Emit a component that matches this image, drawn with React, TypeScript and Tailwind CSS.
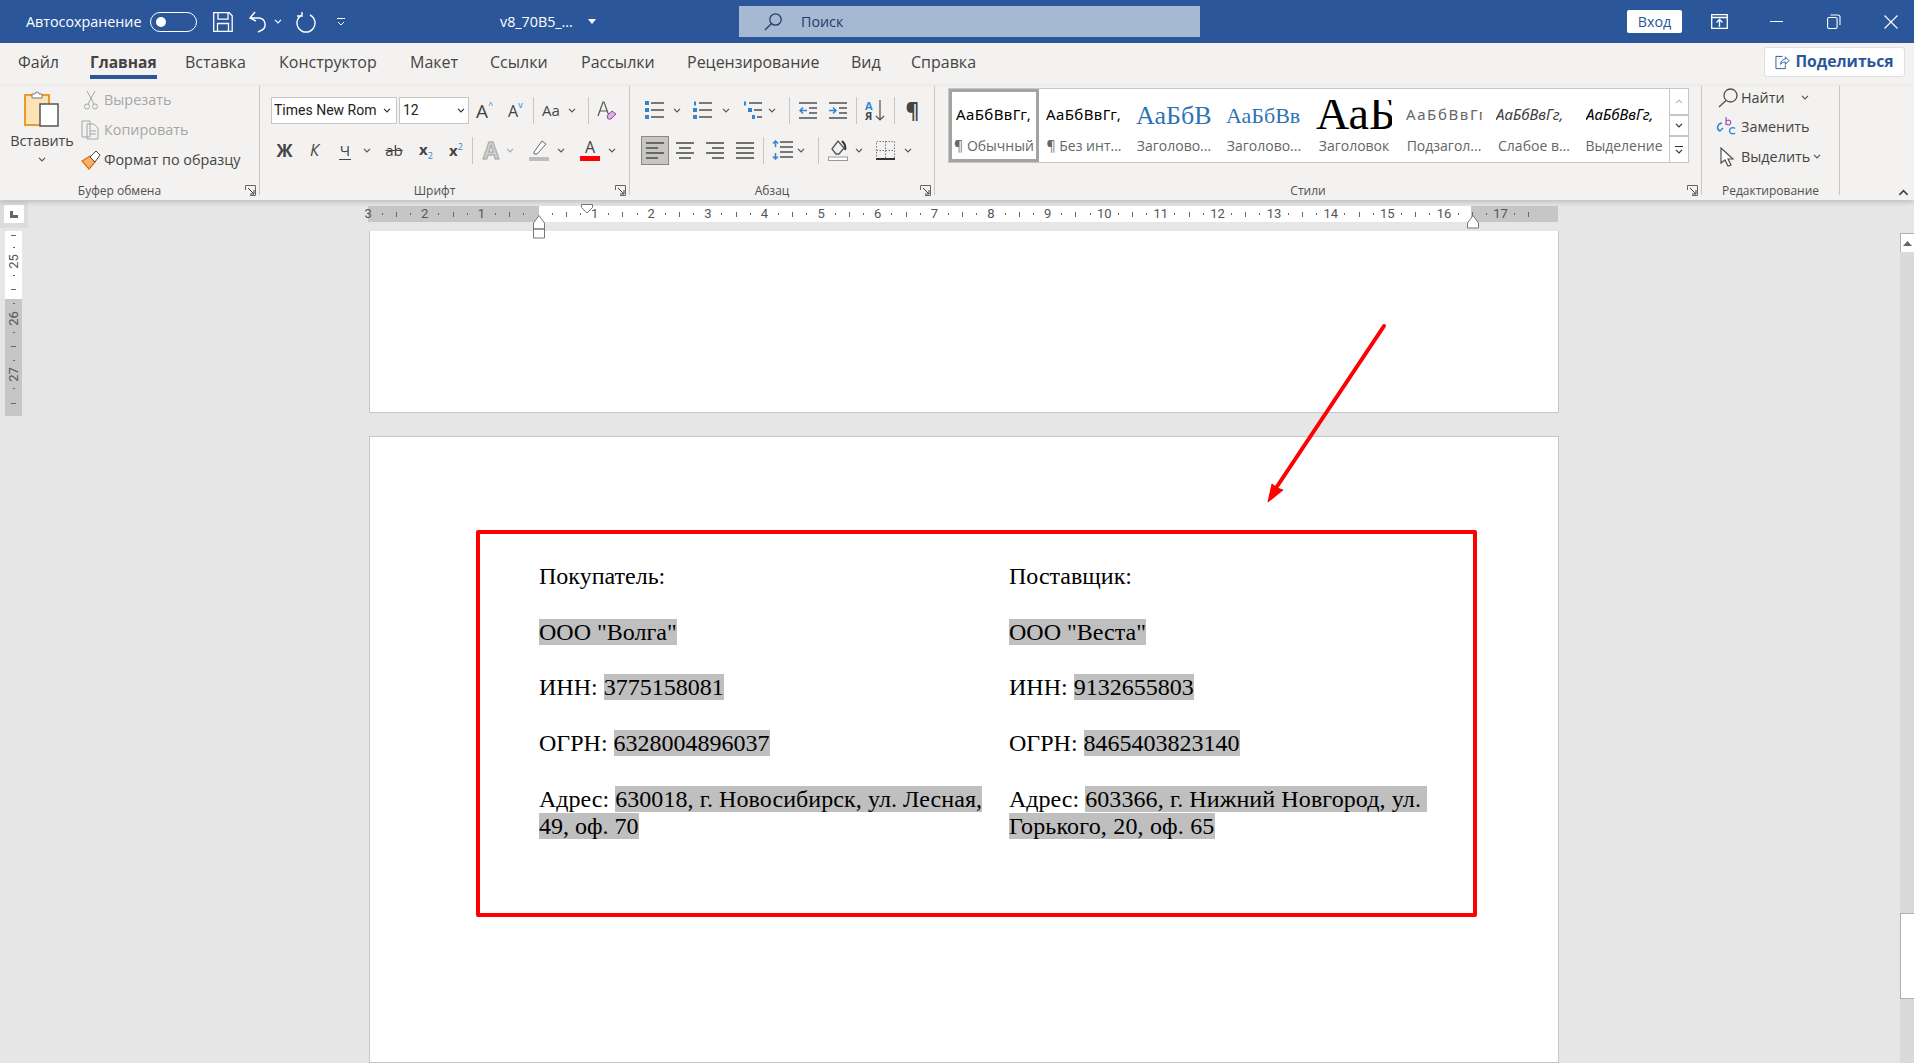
import React from "react";

const S = "#505050";
const Chev = ({ className = "", color = "#555" }: { className?: string; color?: string }) => (
  <svg viewBox="0 0 8 5" className={`h-[5px] w-[8px] shrink-0 ${className}`} fill="none" stroke={color} strokeWidth="1.2"><path d="M1 .8l3 3 3-3" /></svg>
);
const Sep = ({ className = "" }: { className?: string }) => <div className={`h-[27px] w-px shrink-0 bg-[#c8c6c4] ${className}`} />;
const Launcher = () => (
  <svg viewBox="0 0 11 11" className="absolute bottom-[-1px] right-[3px] h-[11px] w-[11px]" fill="none" stroke="#666"><path d="M.5 5V.5h10v10H5" /><path d="M3 3l6 6M5 9h4V5" stroke="#444" /></svg>
);
const Group = ({ w, label, children, centered }: { w: string; label: string; children: React.ReactNode; centered?: boolean }) => (
  <div className={`relative h-[109px] shrink-0 border-r border-[#c8c6c4] ${w}`}>
    <div className="flex h-[100px] flex-col">{children}</div>
    <div className={`h-[10px] text-center text-[12px] leading-[10px] text-[#505050] ${centered ? "" : "pr-[20px]"}`}>{label}</div>
  </div>
);
const Lines = ({ rows, className = "" }: { rows: [number, number][]; className?: string }) => (
  <svg viewBox="0 0 18 17" className={`h-[17px] w-[18px] shrink-0 ${className}`} stroke={S} strokeWidth="1.6">
    {rows.map(([a, b], i) => <line key={i} x1={a} x2={b} y1={1 + i * 5} y2={1 + i * 5} />)}
  </svg>
);
const TabNames: [string, string][] = [
  ["Файл", "ml-[18px] w-[40px]"],
  ["Главная", "ml-[32px] w-[67px]"],
  ["Вставка", "ml-[28px] w-[61px]"],
  ["Конструктор", "ml-[33px] w-[98px]"],
  ["Макет", "ml-[33px] w-[48px]"],
  ["Ссылки", "ml-[32px] w-[58px]"],
  ["Рассылки", "ml-[33px] w-[74px]"],
  ["Рецензирование", "ml-[32px] w-[134px]"],
  ["Вид", "ml-[30px] w-[30px]"],
  ["Справка", "ml-[30px] w-[66px]"],
];
const styles = [
  { p: "АаБбВвГг,", l: "¶ Обычный", c: "text-[15px] tracking-[.4px] text-black font-['Noto_Sans']", sel: true },
  { p: "АаБбВвГг,", l: "¶ Без инт...", c: "text-[15px] tracking-[.4px] text-black font-['Noto_Sans']" },
  { p: "АаБбВ", l: "Заголово...", c: "pt-[2px] text-[26px] text-[#2e74b5] font-['Liberation_Serif']" },
  { p: "АаБбВв", l: "Заголово...", c: "pt-[2px] text-[22px] text-[#2e74b5] font-['Liberation_Serif']" },
  { p: "АаБ", l: "Заголовок", c: "text-[46px] text-black font-['Liberation_Serif'] leading-[40px] [clip-path:inset(8px_0_0_0)]" },
  { p: "АаБбВвГг", l: "Подзагол...", c: "text-[15px] tracking-[1.6px] text-[#666] font-['Noto_Sans']" },
  { p: "АаБбВвГг,", l: "Слабое в...", c: "text-[15px] italic text-[#404040] font-['Noto_Sans']" },
  { p: "АаБбВвГг,", l: "Выделение", c: "text-[15px] italic text-black font-['Noto_Sans']" },
];
const Hl = ({ children }: { children: React.ReactNode }) => <span className="bg-[#bfbfbf]">{children}</span>;
const marks = Array.from({ length: 83 }, (_, i) => i);

export default function App() {
  return (
    <div className="flex h-[1063px] w-[1914px] flex-col overflow-hidden bg-[#e6e6e6] font-['Open_Sans',sans-serif]">
      {/* Title bar */}
      <div className="flex h-[43px] shrink-0 items-center bg-[#2b579a] text-[14.3px] text-white">
        <span className="ml-[26px] w-[116px] whitespace-nowrap">Автосохранение</span>
        <div className="ml-[8px] flex h-[20px] w-[47px] items-center rounded-full border border-white pl-[5px]"><div className="h-[10px] w-[10px] rounded-full bg-white" /></div>
        <svg viewBox="0 0 20 20" className="ml-[16px] h-[20px] w-[20px]" fill="none" stroke="#fff" strokeWidth="1.3"><path d="M.7.7h15.5l3 3v15.6H.7zM5 .7v6.5h10V.7M4.5 19v-7.5h11V19" /></svg>
        <svg viewBox="0 0 20 22" className="ml-[15px] h-[22px] w-[20px]" fill="none" stroke="#fff" strokeWidth="1.4"><path d="M7 1L2 7l6 3M2 7h9a6.5 6.5 0 0 1 2 12.5L10 21" /></svg>
        <Chev color="#fff" className="ml-[6px]" />
        <svg viewBox="0 0 20 22" className="ml-[14px] h-[22px] w-[20px]" fill="none" stroke="#fff" strokeWidth="1.4"><path d="M6 4a9 9 0 1 0 8 0M6 1v4H1" /></svg>
        <svg viewBox="0 0 10 10" className="ml-[20px] h-[10px] w-[10px]" fill="none" stroke="#fff"><path d="M1 1.5h8M2 5l3 3 3-3" /></svg>
        <span className="ml-[154px] w-[71px] whitespace-nowrap">v8_70B5_...</span>
        <svg viewBox="0 0 8 5" className="ml-[17px] h-[5px] w-[8px]" fill="#fff"><path d="M0 0h8L4 5z" /></svg>
        <div className="ml-[143px] flex h-[31px] w-[461px] items-center bg-[#a6b9d3] text-[#1d3b6b]">
          <svg viewBox="0 0 18 18" className="ml-[25px] h-[18px] w-[18px]" fill="none" stroke="#1d3b6b" strokeWidth="1.2"><circle cx="11.5" cy="6.5" r="5.7" /><path d="M7.5 10.5L1 17" /></svg>
          <span className="ml-[19px]">Поиск</span>
        </div>
        <div className="ml-[427px] flex h-[23px] w-[55px] items-center justify-center rounded-[2px] bg-white text-[#2b579a]">Вход</div>
        <svg viewBox="0 0 17 15" className="ml-[29px] h-[15px] w-[17px]" fill="none" stroke="#fff" strokeWidth="1.3"><path d="M.7.7h15.6v13.6H.7zM.7 3.5h15.6" /><path d="M8.5 13V6M5.5 8.5l3-3 3 3" /></svg>
        <div className="ml-[42px] h-px w-[13px] bg-white" />
        <svg viewBox="0 0 14 15" className="ml-[44px] h-[15px] w-[14px]" fill="none" stroke="#fff" strokeWidth="1.1"><rect x=".6" y="3.5" width="9.5" height="11" rx="1.5" /><path d="M3.5 1h7.5A2 2 0 0 1 13 3v8" /></svg>
        <svg viewBox="0 0 14 14" className="ml-[43px] h-[14px] w-[14px]" stroke="#fff" strokeWidth="1.1"><path d="M.5.5l13 13M13.5.5l-13 13" /></svg>
      </div>

      {/* Tabs */}
      <div className="flex h-[43px] shrink-0 bg-[#f3f2f1] text-[16px] text-[#444]">
        {TabNames.map(([t, c]) => (
          <div key={t} className={`relative h-[36px] whitespace-nowrap pt-[8px] leading-[22px] ${c} ${t === "Главная" ? "border-b-[4px] border-[#2b579a] text-[15.5px] font-bold" : ""}`}>{t}</div>
        ))}
        <div className="ml-auto mr-[9px] mt-[4px] flex h-[30px] w-[141px] items-center justify-center gap-[5px] rounded-[3px] border border-[#e1dfdd] bg-white text-[15.7px] font-bold text-[#2b579a]">
          <svg viewBox="0 0 16 16" className="h-[15px] w-[15px]" fill="none" stroke="#2b579a"><path d="M8 1.5H1v13h10V11M6 10c0-4 3-5.5 5-5.5V2l4 4-4 4V7.5c-2 0-4 .5-5 2.5z" /></svg>
          <span>Поделиться</span>
        </div>
      </div>

      {/* Ribbon */}
      <div className="relative z-10 flex h-[114px] shrink-0 bg-[#f3f2f1] text-[14.4px] text-[#444] shadow-[0_2px_5px_rgba(0,0,0,0.18)]">
        <Group w="w-[260px]" label="Буфер обмена">
          <div className="flex h-full">
            <div className="flex w-[84px] shrink-0 flex-col items-center">
              <svg viewBox="0 0 36 38" className="mt-[4px] h-[38px] w-[36px]"><rect x="1" y="5" width="24" height="30" fill="#fbe3b5" stroke="#ed9a2c" strokeWidth="2" /><path d="M8 8V4h3a2 2 0 0 1 4 0h3v4z" fill="#fff" stroke="#777" /><rect x="16" y="14" width="18" height="22" fill="#fff" stroke="#555" strokeWidth="1.5" /></svg>
              <span className="mt-[3px] h-[20px] leading-[20px]">Вставить</span>
              <Chev className="mt-[6px]" />
            </div>
            <div className="-ml-[4px] -mt-px flex flex-col whitespace-nowrap pl-px">
              <div className="flex h-[30px] items-center pl-[2px] text-[#a6a6a6]">
                <svg viewBox="0 0 16 20" className="mr-[5px] h-[20px] w-[16px]" fill="none" stroke="#a6a6a6"><path d="M4 1l7 13M12 1L5 14" /><circle cx="4" cy="16.5" r="2.5" /><circle cx="12" cy="16.5" r="2.5" /></svg>
                <span>Вырезать</span>
              </div>
              <div className="flex h-[30px] items-center text-[#a6a6a6]">
                <svg viewBox="0 0 20 20" className="mr-[3px] h-[20px] w-[20px]" fill="none" stroke="#a6a6a6"><path d="M1 1h8l0 16H1zM6 4h7l4 4v11H6z" fill="#f3f2f1" /><path d="M9 11h6M9 14h6" /></svg>
                <span>Копировать</span>
              </div>
              <div className="flex h-[30px] items-center">
                <svg viewBox="0 0 20 20" className="mr-[3px] h-[20px] w-[20px]" fill="none"><path d="M1 11l8-5 5 6-6 7z" fill="#f6b26b" stroke="#d9730d" strokeWidth="1.3" /><path d="M9 7l6-6 4 4-5 7z" fill="#fff" stroke="#444" /></svg>
                <span>Формат по образцу</span>
              </div>
            </div>
          </div>
          <Launcher />
        </Group>

        <Group w="w-[370px]" label="Шрифт">
          <div className="mt-[11px] flex h-[27px] items-center">
            <div className="ml-[11px] flex h-[27px] w-[126px] items-center border border-[#c8c6c4] bg-white pl-[2px] font-['Roboto'] text-[14px] text-[#222]"><span className="w-[103px] overflow-hidden whitespace-nowrap">Times New Roman</span><Chev className="ml-[6px]" color="#333" /></div>
            <div className="ml-[2px] flex h-[27px] w-[70px] items-center justify-between border border-[#c8c6c4] bg-white px-[3px] font-['Roboto'] text-[14px] text-[#222]"><span>12</span><Chev color="#333" /></div>
            <div className="ml-[7px] flex w-[16px] items-start text-[19px] leading-[22px]">A<span className="text-[9px] leading-[9px] text-[#2e86d1]">^</span></div>
            <div className="ml-[16px] flex w-[16px] items-start text-[16px] leading-[22px]">A<span className="text-[9px] leading-[9px] text-[#2e86d1]">v</span></div>
            <Sep className="ml-[9px]" />
            <div className="ml-[8px] w-[21px] text-[15px]">Aa</div>
            <Chev className="ml-[5px]" />
            <Sep className="ml-[12px]" />
            <svg viewBox="0 0 20 22" className="ml-[8px] h-[22px] w-[20px]" fill="none"><path d="M1 16L6 2h1l5 14M3 11h7" stroke="#555" strokeWidth="1.2" /><path d="M10 16l5-5 4 3-5 5h-3z" fill="#d7b2df" stroke="#9a3fb0" /></svg>
          </div>
          <div className="mt-[11px] flex h-[30px] items-center text-[#444]">
            <div className="ml-[16px] w-[17px] text-center text-[17px] font-bold leading-none">Ж</div>
            <div className="ml-[16px] w-[11px] text-center text-[16px] italic leading-none">К</div>
            <div className="ml-[19px] w-[12px] border-b border-[#444] text-center text-[15px] leading-[18px]">Ч</div>
            <Chev className="ml-[12px]" />
            <div className="ml-[13px] w-[20px] text-center text-[15px] leading-none line-through">ab</div>
            <div className="ml-[15px] w-[14px] text-[15px] font-bold">x<span className="align-sub text-[9px] font-normal text-[#2e86d1]">2</span></div>
            <div className="ml-[16px] w-[14px] text-[15px] font-bold">x<span className="align-super text-[9px] font-normal text-[#2e86d1]">2</span></div>
            <Sep className="ml-[9px]" />
            <div className="ml-[8px] w-[20px] text-center text-[23px] font-bold leading-none text-[#d0d0d0] [-webkit-text-stroke:1px_#a6a6a6]">A</div>
            <Chev className="ml-[5px]" color="#aaa" />
            <svg viewBox="0 0 20 22" className="ml-[15px] h-[22px] w-[20px]"><path d="M5 13L13 2l4 3-9 10H5z" fill="#fff" stroke="#666" /><rect y="18" width="20" height="4" fill="#bdbdbd" /></svg>
            <Chev className="ml-[8px]" />
            <div className="ml-[15px] flex w-[20px] flex-col items-center"><span className="text-[16px] leading-[17px]">A</span><div className="h-[5px] w-[20px] bg-[#ff0000]" /></div>
            <Chev className="ml-[8px]" />
          </div>
          <Launcher />
        </Group>

        <Group w="w-[305px]" label="Абзац">
          <div className="mt-[11px] flex h-[27px] items-center">
            <svg viewBox="0 0 19 19" className="ml-[15px] h-[19px] w-[19px]" stroke={S} strokeWidth="1.5"><path d="M6 2h13M6 9h13M6 16h13" /><path d="M0 0h4v4H0zM0 7h4v4H0zM0 14h4v4H0z" fill="#2e86d1" stroke="none" /></svg>
            <Chev className="ml-[9px]" />
            <svg viewBox="0 0 19 19" className="ml-[12px] h-[19px] w-[19px]" stroke={S} strokeWidth="1.5"><path d="M6 2h13M6 9h13M6 16h13" /><path d="M1 .5h2v4H1zM0 7h4v4H0zM0 14h4v4H0z" fill="#2e86d1" stroke="none" /></svg>
            <Chev className="ml-[10px]" />
            <svg viewBox="0 0 19 19" className="ml-[13px] h-[19px] w-[19px]" stroke={S} strokeWidth="1.5"><path d="M6 2h13M11 9h8M14 16h5" /><path d="M1 .5h2v4H1zM5 7h4v4H5zM9 14h3v4H9z" fill="#2e86d1" stroke="none" /></svg>
            <Chev className="ml-[6px]" />
            <Sep className="ml-[13px]" />
            <svg viewBox="0 0 18 18" className="ml-[9px] h-[18px] w-[18px]" fill="none" stroke={S} strokeWidth="1.5"><path d="M0 1h18M10 6h8M10 11h8M0 16h18" /><path d="M8 8.5H1M4 5.5l-3 3 3 3" stroke="#2e86d1" /></svg>
            <svg viewBox="0 0 18 18" className="ml-[12px] h-[18px] w-[18px]" fill="none" stroke={S} strokeWidth="1.5"><path d="M0 1h18M10 6h8M10 11h8M0 16h18" /><path d="M0 8.5h7M4 5.5l3 3-3 3" stroke="#2e86d1" /></svg>
            <Sep className="ml-[9px]" />
            <div className="ml-[8px] flex w-[21px] items-center">
              <div className="flex w-[10px] flex-col text-[11px] font-bold leading-[10px]"><span className="text-[#2e86d1]">A</span><span>Я</span></div>
              <svg viewBox="0 0 10 21" className="h-[21px] w-[10px]" fill="none" stroke={S} strokeWidth="1.2"><path d="M5 0v20M1 16l4 4 4-4" /></svg>
            </div>
            <Sep className="ml-[8px]" />
            <div className="ml-[10px] w-[15px] text-center text-[21px] font-bold leading-none">¶</div>
          </div>
          <div className="mt-[11px] flex h-[30px] items-center">
            <div className="ml-[11px] flex h-[29px] w-[28px] items-center justify-center border border-[#8a8886] bg-[#c8c6c4]"><Lines rows={[[0, 18], [0, 12], [0, 18], [0, 12]]} /></div>
            <Lines className="ml-[7px]" rows={[[0, 18], [3, 15], [0, 18], [3, 15]]} />
            <Lines className="ml-[12px]" rows={[[0, 18], [6, 18], [0, 18], [6, 18]]} />
            <Lines className="ml-[12px]" rows={[[0, 18], [0, 18], [0, 18], [0, 18]]} />
            <Sep className="ml-[9px]" />
            <svg viewBox="0 0 21 20" className="ml-[8px] h-[20px] w-[21px]" fill="none" strokeWidth="1.5"><path d="M8 2h13M8 7h13M8 12h13M8 17h13" stroke={S} /><path d="M3.5 1v6M1 3.5l2.5-2.5L6 3.5M3.5 13v6M1 16.5L3.5 19 6 16.5" stroke="#2e86d1" /></svg>
            <Chev className="ml-[4px]" />
            <Sep className="ml-[13px]" />
            <svg viewBox="0 0 20 22" className="ml-[9px] h-[22px] w-[20px]" fill="none"><path d="M4 10l6-8 6 7-5 6H8z" stroke="#555" strokeWidth="1.3" /><path d="M14 2c3 3 4 6 3 9" stroke="#333" strokeWidth="2" /><rect x=".5" y="18" width="19" height="3.5" fill="#fff" stroke="#999" /></svg>
            <Chev className="ml-[7px]" />
            <svg viewBox="0 0 19 19" className="ml-[13px] h-[19px] w-[19px]" fill="none" stroke="#777" strokeDasharray="1.5 1.5"><path d="M.5.5h18v18H.5zM9.5.5v18M.5 9.5h18" /><path d="M0 18h19" stroke="#333" strokeWidth="2" strokeDasharray="none" /></svg>
            <Chev className="ml-[9px]" />
          </div>
          <Launcher />
        </Group>

        <Group w="w-[767px]" label="Стили">
          <div className="ml-[13px] mt-[2px] flex h-[75px] w-[741px] border border-[#c8c6c4] bg-white">
            <div className="flex w-[721px] overflow-hidden">
              {styles.map((s, i) => (
                <div key={i} className={`flex h-full w-[90px] shrink-0 flex-col items-center border-[3px] ${s.sel ? "border-[#a3a3a3]" : "border-transparent"}`}>
                  <div className={`flex h-[44px] w-[76px] items-center overflow-hidden whitespace-nowrap ${s.c}`}>{s.p}</div>
                  <div className="whitespace-nowrap text-[14px] leading-[20px] text-[#666]">{s.l}</div>
                </div>
              ))}
            </div>
            <div className="flex w-[19px] flex-col justify-between border-l border-[#c8c6c4]">
              <div className="flex h-[24px] items-center justify-center"><Chev className="rotate-180" color="#bbb" /></div>
              <div className="flex h-[23px] items-center justify-center border-y-2 border-[#c8c6c4]"><Chev color="#333" /></div>
              <div className="flex h-[24px] flex-col items-center justify-center gap-[2px]"><div className="h-px w-[8px] bg-[#333]" /><Chev color="#333" /></div>
            </div>
          </div>
          <Launcher />
        </Group>

        <Group w="w-[138px]" label="Редактирование" centered>
          <div className="-mt-[3px] flex h-[29.5px] items-center pl-[16px]">
            <svg viewBox="0 0 20 20" className="h-[20px] w-[20px]" fill="none" stroke={S} strokeWidth="1.3"><circle cx="12.5" cy="7.5" r="6.5" /><path d="M8 12.5L1 19" /></svg>
            <span className="ml-[3px]">Найти</span>
            <Chev className="ml-[16px]" />
          </div>
          <div className="flex h-[29.5px] items-center pl-[14px]">
            <svg viewBox="0 0 20 22" className="h-[22px] w-[20px]" fill="none"><path d="M6 7c-5 1-6 6-2 8M1 12l3 3 3-3" stroke="#2e86d1" strokeWidth="1.4" /><path d="M10 1v8M10 6a2.4 2.4 0 1 1 0 1" stroke="#a050c0" strokeWidth="1.2" /><path d="M19 12.5a3.2 3.2 0 1 0 0 4.5" stroke="#2e86d1" strokeWidth="1.3" /></svg>
            <span className="ml-[5px]">Заменить</span>
          </div>
          <div className="flex h-[29.5px] items-center pl-[18px]">
            <svg viewBox="0 0 14 20" className="h-[20px] w-[14px]" fill="#fff" stroke={S} strokeWidth="1.2"><path d="M1 1v15l4-3 3 6 3-1-3-6h5z" /></svg>
            <span className="ml-[7px]">Выделить</span>
            <Chev className="ml-[3px]" />
          </div>
        </Group>
        <Chev className="absolute left-[1898px] top-[103px] h-[7px] w-[11px] rotate-180" color="#444" />
      </div>

      {/* Work area */}
      <div className="flex min-h-0 flex-1 flex-col">
        <div className="flex h-[31px] shrink-0">
          <div className="mt-px flex h-[27px] w-[28px] shrink-0 items-start bg-[#dcdcdc] pl-[4px] pt-[4px]">
            <div className="flex h-[18px] w-[20px] items-center justify-center bg-white"><svg viewBox="0 0 8 7" className="h-[7px] w-[8px]" fill="#666"><path d="M0 0h3v4h5v3H0z" /></svg></div>
          </div>
          <div className="relative ml-[340px] mt-[6px] flex h-[16px] w-[1190px] shrink-0">
            <div className="w-[171px] bg-[#c6c6c6]" />
            <div className="w-[932px] bg-white" />
            <div className="w-[87px] bg-[#c6c6c6]" />
            <div className="absolute left-[-7px] top-0 flex h-[16px] font-['Roboto'] text-[13px] text-[#555]">
              {marks.map((i) => {
                const v = i / 4 - 3;
                const isNum = i % 4 === 0 && v !== 0;
                return (
                  <div key={i} className="flex h-[16px] w-[14.17px] shrink-0 items-center justify-center">
                    {isNum ? Math.abs(v) : i % 4 === 0 ? null : i % 4 === 2 ? <div className="h-[5px] w-px bg-[#666]" /> : <div className="h-[2px] w-px bg-[#666]" />}
                  </div>
                );
              })}
            </div>
            <svg viewBox="0 0 12 24" className="absolute left-[165px] top-[9px] h-[24px] w-[12px]" fill="#fff" stroke="#777"><path d="M.5 8L6 .5 11.5 8v6H.5zM.5 14h11v9H.5z" /></svg>
            <svg viewBox="0 0 12 10" className="absolute left-[213px] top-[-2px] h-[10px] w-[12px]" fill="#fff" stroke="#777"><path d="M.5.5h11v3L6 9 .5 3.5z" /></svg>
            <svg viewBox="0 0 12 14" className="absolute left-[1099px] top-[9px] h-[14px] w-[12px]" fill="#fff" stroke="#777"><path d="M.5 8L6 .5 11.5 8v5H.5z" /></svg>
          </div>
        </div>
        <div className="flex min-h-0 flex-1">
          <div className="ml-[5px] flex h-[185px] w-[17px] shrink-0 flex-col overflow-hidden bg-[linear-gradient(#fff_68px,#c6c6c6_68px)] font-['Roboto'] text-[13px] text-[#555]">
            <div className="flex h-[9px] items-center justify-center"><div className="h-px w-[5px] bg-[#666]" /></div>
            {[".", "25", ".", "-", ".", "26", ".", "-", ".", "27", ".", "-"].map((m, i) => (
              <div key={i} className="flex h-[14.2px] shrink-0 items-center justify-center">
                {m === "." ? <div className="h-px w-[2px] bg-[#666]" /> : m === "-" ? <div className="h-px w-[5px] bg-[#666]" /> : <span className="-rotate-90 leading-none">{m}</span>}
              </div>
            ))}
          </div>
          <div className="ml-[347px] flex w-[1190px] shrink-0 flex-col">
            <div className="h-[182px] shrink-0 border-x border-b border-[#c6c6c6] bg-white" />
            <div className="relative mt-[23px] flex-1 border border-[#c6c6c6] bg-white pl-[169px] pt-[126px] font-['Liberation_Serif',serif] text-[24px] leading-[27.7px] text-black">
              <div className="grid grid-cols-[470px_500px]">
                <div className="flex flex-col gap-[28px]">
                  <p>Покупатель:</p>
                  <p><Hl>ООО "Волга"</Hl></p>
                  <p>ИНН: <Hl>3775158081</Hl></p>
                  <p>ОГРН: <Hl>6328004896037</Hl></p>
                  <p className="leading-[27px]">Адрес: <Hl><span className="tracking-[0.07px]">630018, г. Новосибирск, ул. Лесная,</span><br />49, оф. 70</Hl></p>
                </div>
                <div className="flex flex-col gap-[28px]">
                  <p>Поставщик:</p>
                  <p><Hl>ООО "Веста"</Hl></p>
                  <p>ИНН: <Hl>9132655803</Hl></p>
                  <p>ОГРН: <Hl>8465403823140</Hl></p>
                  <p className="leading-[27px]">Адрес: <Hl><span className="tracking-[0.1px]">603366, г. Нижний Новгород, ул.{"\u00a0"}</span><br /><span className="tracking-[0.18px]">Горького, 20, оф. 65</span></Hl></p>
                </div>
              </div>
              <div className="absolute left-[106px] top-[93px] h-[387px] w-[1001px] rounded-[2px] border-4 border-[#ff0000]" />
              <svg viewBox="0 0 130 190" className="absolute left-[893px] top-[-117px] h-[190px] w-[130px]" fill="none"><path d="M121 6L13 168" stroke="#ff0000" strokeWidth="4" strokeLinecap="round" /><path d="M5 182L9 164 14 168 20 170z" fill="#ff0000" stroke="#ff0000" /></svg>
            </div>
          </div>
          <div className="ml-auto mt-[2px] flex w-[14px] shrink-0 flex-col bg-[#dadada]">
            <div className="flex h-[19px] items-center justify-center border-l border-t border-[#b0b0b0] bg-white"><svg viewBox="0 0 9 5" className="h-[5px] w-[9px]" fill="#666"><path d="M4.5 0L9 5H0z" /></svg></div>
            <div className="mt-[661px] h-[86px] border-l border-y border-[#b0b0b0] bg-white" />
          </div>
        </div>
      </div>
    </div>
  );
}
